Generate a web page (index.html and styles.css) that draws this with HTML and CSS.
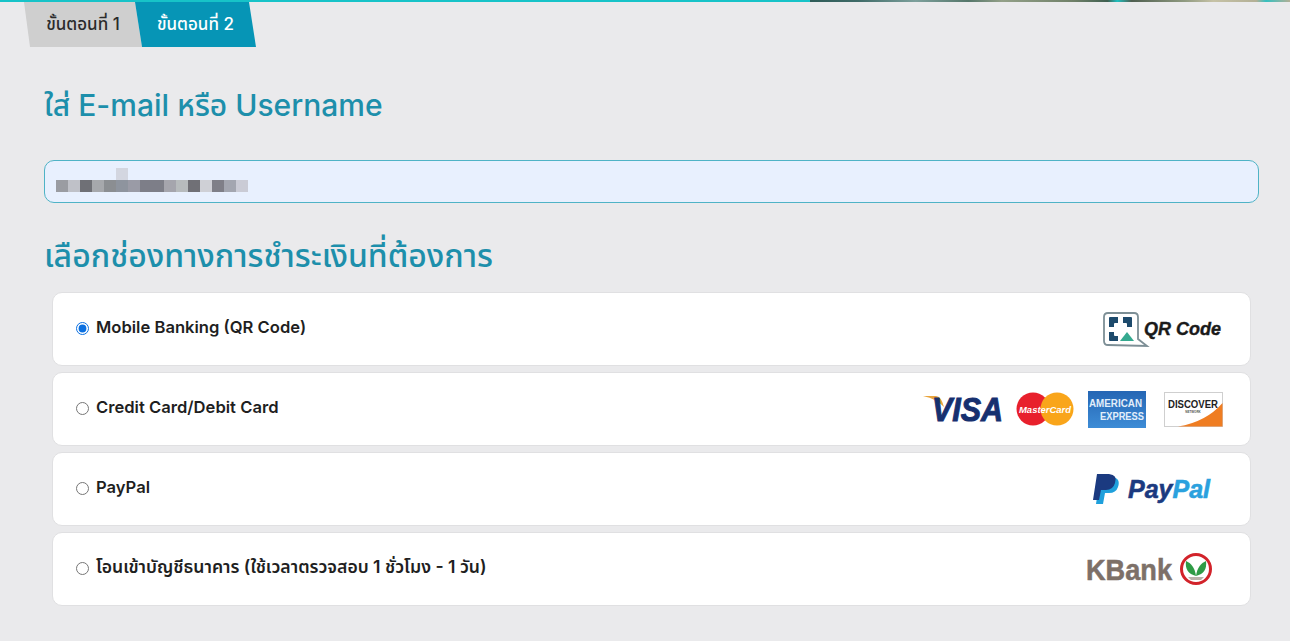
FILE: index.html
```html
<!DOCTYPE html>
<html lang="th">
<head>
<meta charset="utf-8">
<title>ขั้นตอนที่ 2</title>
<link rel="stylesheet" href="styles.css">
</head>
<body>
<div class="topbar"><div class="topbar-progress"></div><div class="topbar-photo"></div></div>
<nav class="steps">
  <div class="step step-done">ขั้นตอนที่ 1</div>
  <div class="step step-active">ขั้นตอนที่ 2</div>
</nav>
<main class="content">
  <h2 class="title title-email">ใส่ E-mail หรือ Username</h2>
  <div class="email-box"><div class="blur-text"></div></div>
  <h2 class="title title-pay">เลือกช่องทางการชำระเงินที่ต้องการ</h2>
  <div class="options">
    <label class="option">
      <span class="option-label"><input type="radio" name="pay" class="radio" checked>Mobile Banking (QR Code)</span>
      <svg class="logo" width="120" height="36" viewBox="0 0 120 36">
        <path d="M6 2h26q4 0 4 4v22l9 7-39-1q-4 0-4-4V6q0-4 4-4z" fill="#fff" stroke="#7d8f96" stroke-width="1.8"/>
        <path d="M7 7q0-1 1-1h8v6h-3q-1 0-1 1v3H7zM21 6h8q1 0 1 1v9h-5v-3q0-1-1-1h-3zM7 21h5v3q0 1 1 1h3v5H8q-1 0-1-1z" fill="#1d4a6c"/>
        <path d="M18 30l7-9 7 9z" fill="#35a98f"/>
        <text x="42" y="24" class="qr-word" textLength="77" lengthAdjust="spacingAndGlyphs">QR Code</text>
      </svg>
    </label>
    <label class="option">
      <span class="option-label"><input type="radio" name="pay" class="radio">Credit Card/Debit Card</span>
      <span class="cards">
        <svg class="card-visa" width="80" height="32" viewBox="0 0 80 32">
          <path d="M0 3h13q5 0 8 11Q14 6 0 3z" fill="#e9a43c"/>
          <text x="9" y="28" class="visa-word" textLength="71" lengthAdjust="spacingAndGlyphs">VISA</text>
        </svg>
        <svg class="card-mc" width="58" height="34" viewBox="0 0 58 34">
          <circle cx="17" cy="17" r="16.5" fill="#e8202c"/>
          <circle cx="41" cy="17" r="16.5" fill="#f9a51a"/>
          <text x="29" y="21" text-anchor="middle" class="mc-word" textLength="52" lengthAdjust="spacingAndGlyphs">MasterCard</text>
        </svg>
        <svg class="card-amex" width="58" height="37" viewBox="0 0 58 37">
          <defs><linearGradient id="amexFill" x1="0" y1="0" x2="0" y2="1"><stop offset="0" stop-color="#2566b4"/><stop offset="1" stop-color="#3d8cd6"/></linearGradient></defs>
          <rect width="58" height="37" fill="url(#amexFill)"/>
          <text x="1" y="16" class="amex-word" textLength="53" lengthAdjust="spacingAndGlyphs">AMERICAN</text>
          <text x="12" y="29" class="amex-word" textLength="44" lengthAdjust="spacingAndGlyphs">EXPRESS</text>
        </svg>
        <svg class="card-disc" width="59" height="35" viewBox="0 0 59 35">
          <rect x=".5" y=".5" width="58" height="34" fill="#fff" stroke="#cfcfcf"/>
          <path d="M14 34.5Q42 30 58.500 11v23.500z" fill="#ef7d22"/>
          <text x="29" y="16" text-anchor="middle" class="disc-word" textLength="50" lengthAdjust="spacingAndGlyphs">DISCOVER</text>
          <text x="29" y="21" text-anchor="middle" class="disc-small">NETWORK</text>
        </svg>
      </span>
    </label>
    <label class="option">
      <span class="option-label"><input type="radio" name="pay" class="radio">PayPal</span>
      <svg class="logo logo-inset" width="120" height="32" viewBox="0 0 120 32">
        <path d="M8 4h12q9 1 6 10-2 6-9 6h-4l-2 11H4z" fill="#1fa0dc"/>
        <path d="M5 1h12q9 1 6 9-2 7-9 7h-5l-2 10H1z" fill="#1b3a80"/>
        <text x="36" y="25" class="pp-word" textLength="82" lengthAdjust="spacingAndGlyphs"><tspan class="pp-dark">Pay</tspan><tspan class="pp-light">Pal</tspan></text>
      </svg>
    </label>
    <label class="option">
      <span class="option-label label-thai"><input type="radio" name="pay" class="radio">โอนเข้าบัญชีธนาคาร (ใช้เวลาตรวจสอบ 1 ชั่วโมง - 1 วัน)</span>
      <svg class="logo logo-inset" width="128" height="34" viewBox="0 0 128 34">
        <text x="2" y="28" class="kb-word" textLength="86" lengthAdjust="spacingAndGlyphs">KBank</text>
        <circle cx="112" cy="17" r="14.500" fill="#fff" stroke="#d2232a" stroke-width="3"/>
        <path d="M112 24C111 16 107 11 102 9 101 17 104 22 112 24z" fill="#2f9b46"/>
        <path d="M112 24C113 16 117 11 122 9 123 17 120 22 112 24z" fill="#2f9b46"/>
        <path d="M104 25h16l-3 3h-10z" fill="#b9b3ab"/>
      </svg>
    </label>
  </div>
</main>
</body>
</html>
```

FILE: styles.css
```css
* { box-sizing: border-box; }
html, body { margin: 0; height: 100%; }
body {
  background: #eaeaec;
  font-family: Inter, "Noto Sans Thai", "Noto Sans", "Liberation Sans", sans-serif;
  color: #222;
  overflow: hidden;
}
svg { overflow: visible; flex: none; }
.topbar { display: flex; height: 2px; }
.topbar-progress { width: 810px; background: #17c3c8; }
.topbar-photo {
  flex: 1;
  background: linear-gradient(90deg, #2f5c58 0, #3f6b68 10%, #7da09c 22%, #55766a 33%, #93a088 40%, #6f8068 55%, #3f5f50 62%, #1fc0c0 64%, #4f5f50 67%, #8f9a80 78%, #c6c2a6 84%, #b3b096 93%, #35c0c0 95%, #b3b096 100%);
}
.steps { display: flex; margin-left: 24px; height: 45px; }
.step {
  display: flex;
  align-items: center;
  justify-content: center;
  height: 45px;
  font-size: 17px;
  font-weight: 500;
}
.step-done {
  width: 118px;
  background: #cfcfcf;
  color: #2b2b2b;
  clip-path: polygon(0 0, 111px 0, 118px 100%, 6px 100%);
}
.step-active {
  width: 121px;
  margin-left: -7px;
  background: #0695b6;
  color: #fff;
  clip-path: polygon(0 0, 114px 0, 121px 100%, 7px 100%);
}
.content { padding: 0 31px 0 44px; }
.title {
  margin: 0;
  font-weight: 500;
  line-height: 40px;
  color: #1d8fab;
}
.title-email { margin-top: 38px; margin-bottom: 35px; font-size: 30px; }
.title-pay { margin-top: 33px; margin-bottom: 16px; font-size: 32px; }
.email-box {
  height: 43px;
  padding: 7px 11px 0;
  background: #e8f0fe;
  border: 1px solid #4fb3c6;
  border-radius: 10px;
}
.blur-text {
  width: 192px;
  height: 24px;
  background:
    linear-gradient(#d3d6e0, #d3d6e0) 60px 0 / 12px 12px no-repeat,
    linear-gradient(90deg,
      #9a9ca2 0 12px, #bfc1c8 12px 24px, #6f7076 24px 36px, #a6a8ac 36px 48px,
      #8b8e92 48px 60px, #8e949e 60px 72px, #9a9ba6 72px 84px, #7d7e88 84px 108px,
      #a5a5ad 108px 120px, #b7bbbd 120px 132px, #707076 132px 144px, #cfd0d6 144px 156px,
      #7f7f88 156px 168px, #a3a6b0 168px 180px, #cacbd5 180px 192px) 0 12px / 192px 12px no-repeat;
}
.options { display: flex; flex-direction: column; gap: 6px; margin: 0 8px; }
.option {
  display: flex;
  align-items: center;
  justify-content: space-between;
  height: 74px;
  padding: 0 27px 0 23px;
  background: #fff;
  border: 1px solid #e0e0e2;
  border-radius: 10px;
}
.option-label {
  display: flex;
  align-items: center;
  margin-top: -4px;
  font-size: 16.6px;
  font-weight: 600;
  color: #1f1f1f;
}
.label-thai { font-size: 17.6px; margin-top: -3px; }
.radio { width: 13px; height: 13px; margin: 2px 7px 0 0; accent-color: #0a6fe0; flex: none; }
.cards { display: flex; align-items: center; }
.card-visa { margin-right: 13px; }
.card-mc { margin-right: 14px; }
.card-amex { margin-right: 18px; }
.logo { margin-right: 1px; }
.logo-inset { margin-right: 11px; }
.qr-word { font: italic 700 19px "Liberation Sans", sans-serif; fill: #1a1a1a; stroke: #1a1a1a; stroke-width: .4px; }
.visa-word { font: italic 700 33px "Liberation Sans", sans-serif; fill: #16306f; stroke: #16306f; stroke-width: 1px; }
.mc-word { font: italic 700 9.5px "Liberation Sans", sans-serif; fill: #fff; }
.amex-word { font: 700 11px "Liberation Sans", sans-serif; fill: #e2eefa; }
.disc-word { font: 700 10px "Liberation Sans", sans-serif; fill: #222; }
.disc-small { font: 700 3px "Liberation Sans", sans-serif; fill: #555; }
.pp-word { font: italic 700 26px "Liberation Sans", sans-serif; stroke-width: .6px; }
.pp-dark { fill: #1b3a80; stroke: #1b3a80; }
.pp-light { fill: #2aa1de; stroke: #2aa1de; }
.kb-word { font: 700 30px "Liberation Sans", sans-serif; fill: #7d7068; stroke: #7d7068; stroke-width: .5px; }
```
